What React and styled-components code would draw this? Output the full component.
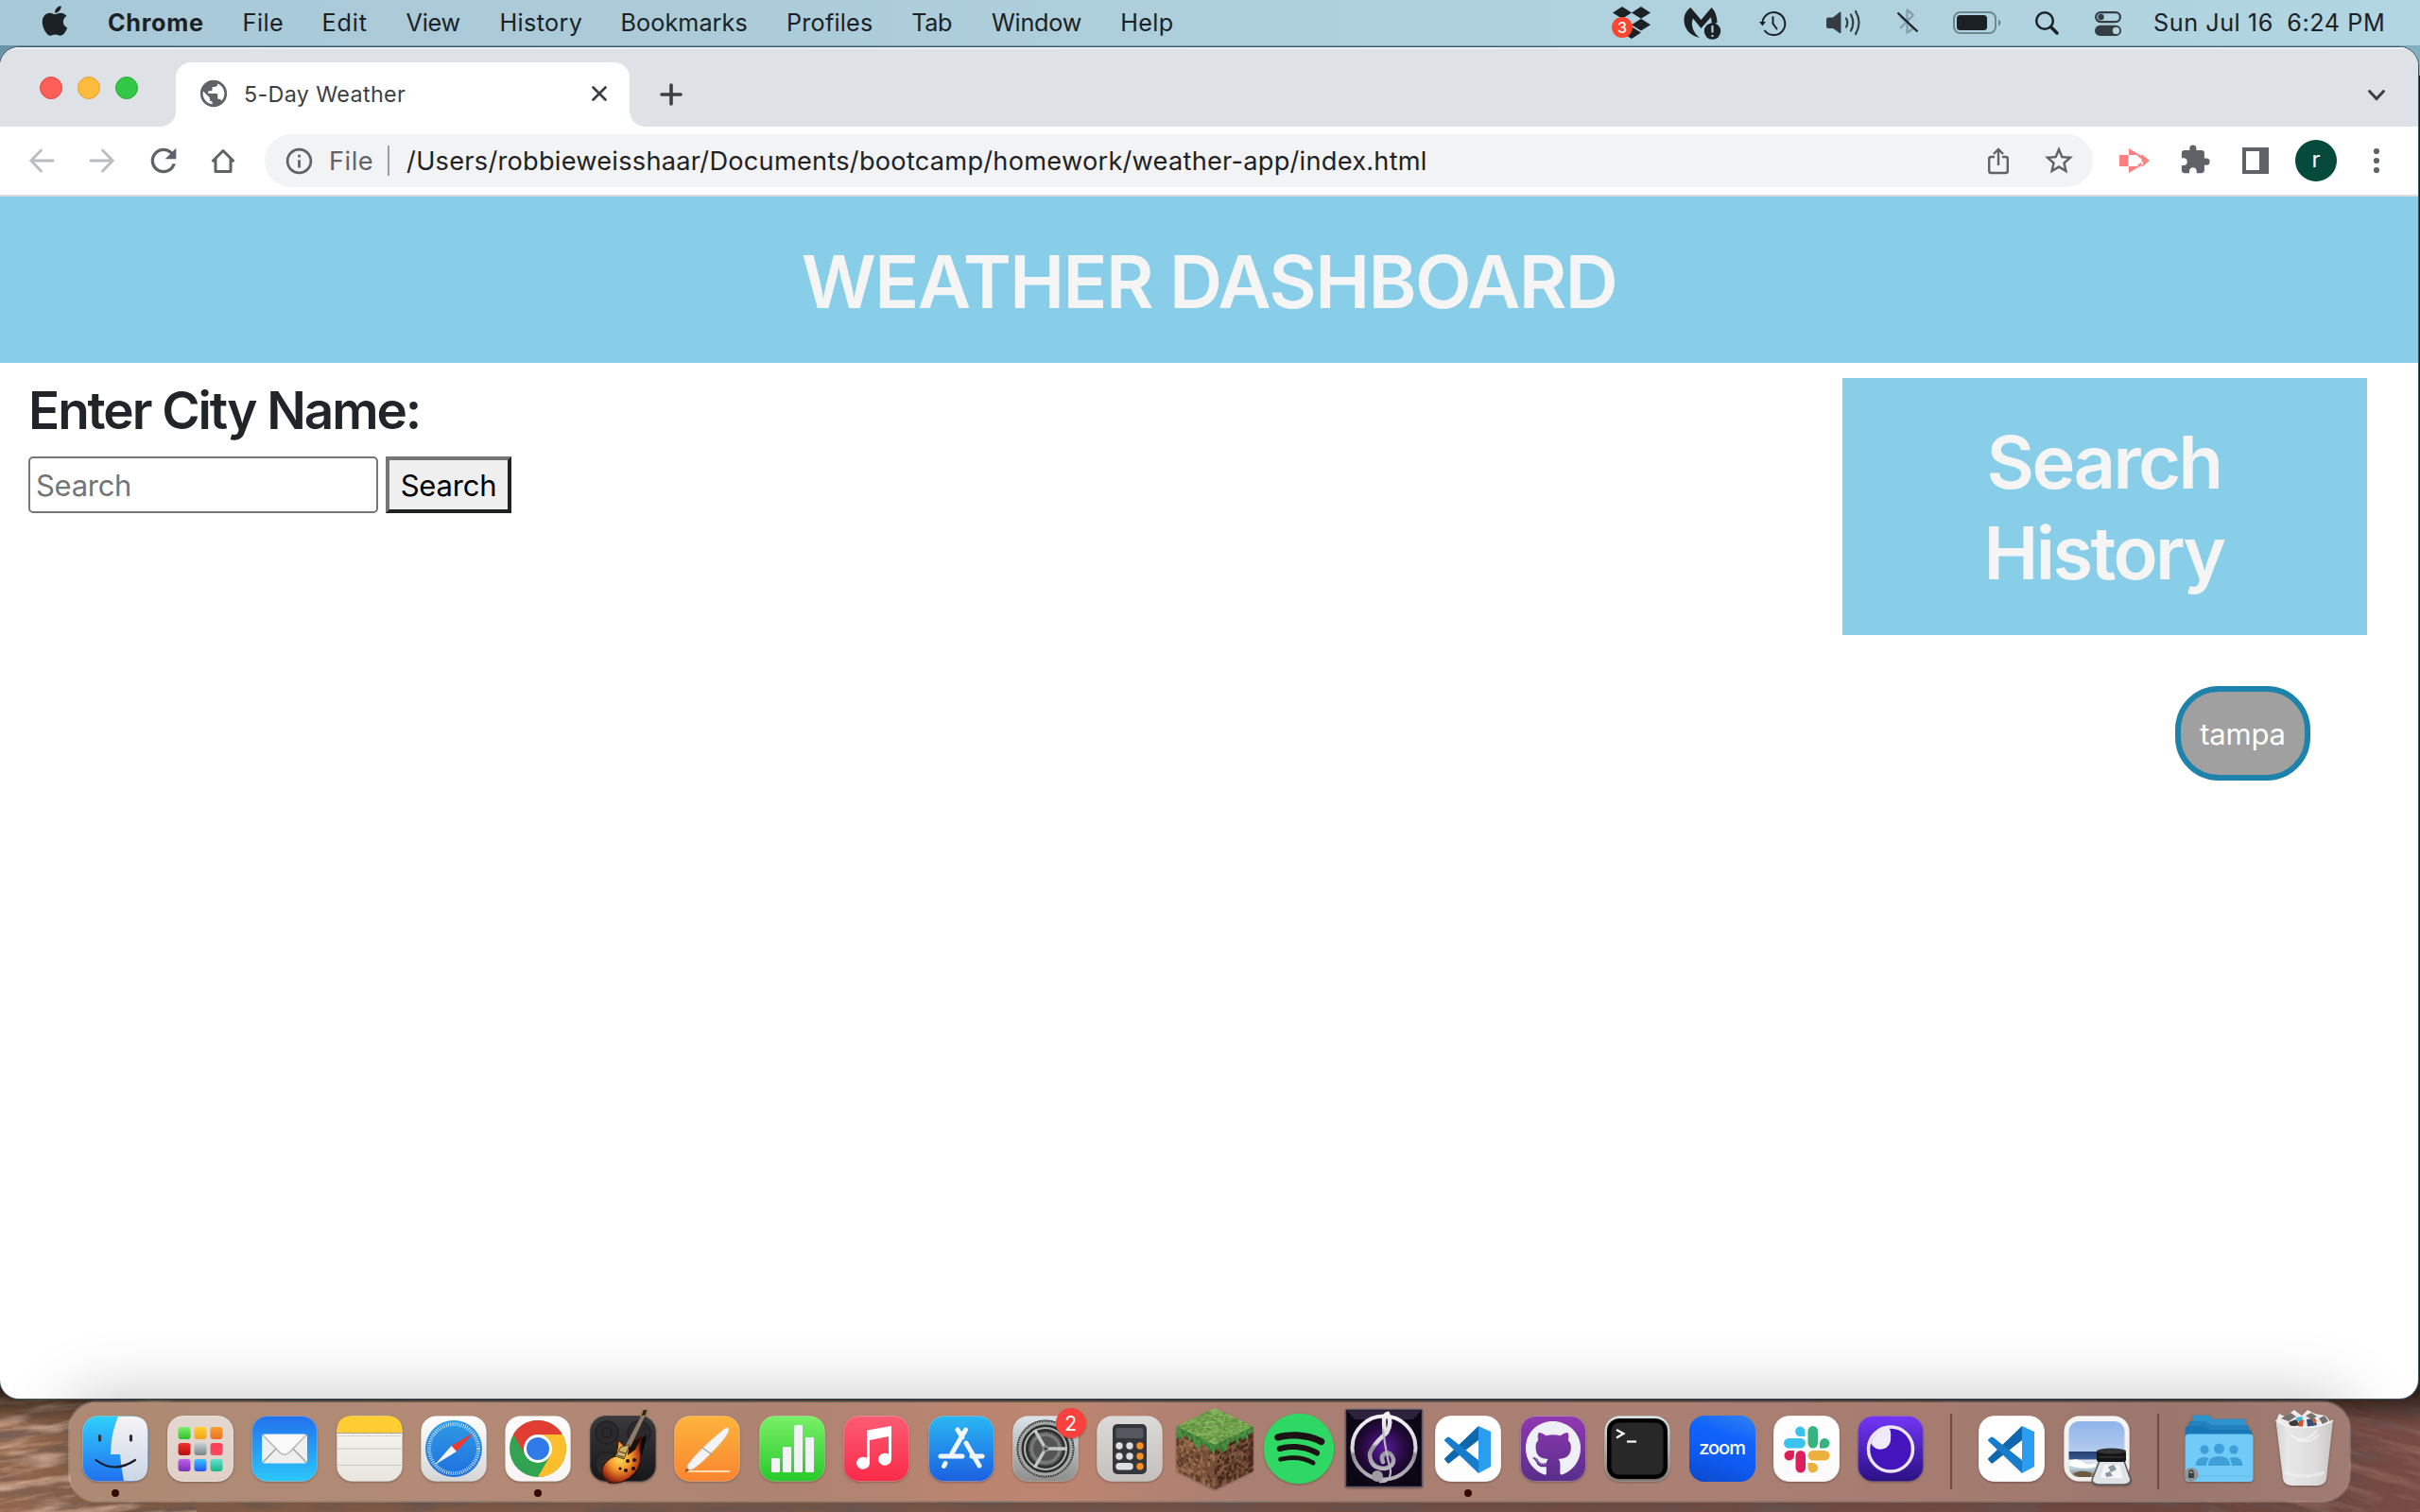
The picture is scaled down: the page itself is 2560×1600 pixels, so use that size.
import React from "react";
import styled, { createGlobalStyle } from "styled-components";
import { FaApple, FaDropbox, FaGithub, FaSpotify } from "react-icons/fa";
import { MdPublic, MdRefresh, MdStarBorder, MdInfoOutline, MdExtension } from "react-icons/md";

const GlobalStyle = createGlobalStyle`
  *, *::before, *::after { box-sizing: border-box; }
  body {
    margin: 0;
    overflow: hidden;
    font-family: Inter, "Liberation Sans", sans-serif;
  }
  h1, h2, p { margin: 0; }
  svg { display: block; flex: none; }
`;

const Desktop = styled.div`
  position: relative;
  display: flex;
  flex-direction: column;
  width: 2560px;
  height: 1600px;
  overflow: hidden;
  background: linear-gradient(90deg, #6c94a9, #83afc2) top / 100% 80px no-repeat, #191817;
`;

/* ---------- Menu bar ---------- */

const MenuBar = styled.header`
  display: flex;
  align-items: center;
  height: 48px;
  flex: none;
  padding-left: 40px;
  color: #1b2124;
  font-size: 25.2px;
  line-height: 46px;
  background: linear-gradient(90deg, #a8c9d7, #abcbd9 25%, #afd0dd 60%, #b1d5e1);
`;

const AppleSlot = styled.div`
  width: 74px;
  margin-top: -4px;
`;

const MenuItem = styled.div`
  width: ${(p) => p.$w}px;
  letter-spacing: ${(p) => p.$ls || 0}px;
  font-weight: ${(p) => (p.$bold ? 700 : 400)};
  white-space: nowrap;
`;

const StatusArea = styled.div`
  display: flex;
  align-items: center;
  margin-left: auto;
  height: 48px;
`;

const StatusIcon = styled.svg`
  height: 48px;
  width: ${(p) => p.$w}px;
  margin-right: ${(p) => p.$gap}px;
  overflow: visible;
`;

const DropboxSlot = styled.div`
  position: relative;
  width: 38px;
  margin-right: 36px;
  svg { margin: 0 -1px; }
`;

const StatusBadge = styled.span`
  position: absolute;
  left: -2px;
  top: 14px;
  width: 22px;
  height: 22px;
  border-radius: 50%;
  background: #ff452f;
  color: #fff;
  font-size: 16px;
  font-weight: 500;
  line-height: 22px;
  text-align: center;
`;

const Clock = styled.div`
  width: 282px;
  display: flex;
  letter-spacing: 0.55px;
  white-space: pre;
  line-height: 45px;
  gap: 14.5px;
`;

/* ---------- Browser window ---------- */

const Window = styled.main`
  display: flex;
  flex-direction: column;
  width: 2558px;
  height: 1430px;
  margin-top: 2px;
  flex: none;
  overflow: hidden;
  border-radius: 20px;
  background: #fff;
  box-shadow: 0 0 0 1px #3d5560;
  position: relative;
`;

const TabStrip = styled.div`
  display: flex;
  align-items: flex-end;
  height: 84px;
  flex: none;
  background: #dee1e6;
  border-top: 2px solid #eff1f4;
`;

const TrafficLights = styled.div`
  display: flex;
  gap: 16px;
  width: 186px;
  padding-left: 42px;
  align-self: flex-start;
  margin-top: 29px;
`;

const Light = styled.i`
  width: 24px;
  height: 24px;
  border-radius: 50%;
  background: ${(p) => p.$c};
  border: 1px solid ${(p) => p.$b};
`;

const Tab = styled.div`
  position: relative;
  display: flex;
  align-items: center;
  width: 480px;
  height: 68px;
  padding: 0 22px 2px 23px;
  border-radius: 16px 16px 0 0;
  background: #fff;
  color: #3c4043;
  &::before, &::after {
    content: "";
    position: absolute;
    bottom: 0;
    width: 16px;
    height: 16px;
  }
  &::before { left: -16px; background: radial-gradient(circle at 0 0, transparent 15.5px, #fff 16px); }
  &::after { right: -16px; background: radial-gradient(circle at 100% 0, transparent 15.5px, #fff 16px); }
`;

const TabTitle = styled.span`
  flex: 1;
  margin-left: 15px;
  font-size: 23.3px;
  letter-spacing: 0.36px;
`;

const NewTab = styled.svg`
  width: 26px;
  height: 26px;
  margin: 0 0 21px 31px;
`;

const TabSearch = styled.svg`
  width: 22px;
  height: 16px;
  margin: 0 33px 25px auto;
`;

const Toolbar = styled.div`
  display: flex;
  align-items: center;
  height: 74px;
  flex: none;
  border-bottom: 2px solid #dadce0;
  background: #fff;
`;

const ToolIcon = styled.svg`
  width: ${(p) => p.$w}px;
  height: 72px;
  margin-left: ${(p) => p.$gap}px;
  overflow: visible;
`;

const ReloadSlot = styled.div`
  width: 28px;
  margin-left: 38px;
  svg { margin-left: -6px; }
`;

const Omnibox = styled.div`
  display: flex;
  align-items: center;
  width: 1934px;
  height: 56px;
  margin-left: 31px;
  padding: 0 18px 0 20px;
  border-radius: 28px;
  background: #f1f3f4;
  color: #202124;
  font-size: 27.2px;
`;

const Scheme = styled.span`
  margin-left: 15px;
  color: #5f6368;
  letter-spacing: 0.5px;
`;

const Divider = styled.i`
  width: 2px;
  height: 32px;
  margin: 0 18px 0 15px;
  background: #9c9fa3;
`;

const Url = styled.span`
  flex: 1;
  letter-spacing: 0.25px;
`;

const StarSlot = styled.div`
  margin-left: 35px;
`;

const Avatar = styled.div`
  width: 44px;
  height: 44px;
  margin-left: 28px;
  border-radius: 50%;
  background: #054a3b;
  color: #fff;
  font-size: 24px;
  line-height: 42px;
  text-align: center;
`;

/* ---------- Page ---------- */

const Banner = styled.h1`
  height: 176px;
  flex: none;
  padding-top: 42px;
  background: #89cee9;
  color: whitesmoke;
  font-size: 77.6px;
  font-weight: 560;
  line-height: 96px;
  letter-spacing: -1.6px;
  text-align: center;
`;

const Columns = styled.div`
  display: flex;
  justify-content: space-between;
  align-items: flex-start;
  padding: 16px 54px 0 30px;
`;

const SearchForm = styled.section`
  h2 {
    height: 67px;
    margin-bottom: 16px;
    color: #212529;
    font-size: 54.8px;
    font-weight: 560;
    line-height: 69px;
    letter-spacing: -2.05px;
  }
`;

const FormRow = styled.div`
  display: flex;
  gap: 8px;
`;

const CityInput = styled.input`
  width: 370px;
  height: 60px;
  padding: 0 6px;
  border: 2px solid #767676;
  border-radius: 5px;
  font: 31px/56px Inter, "Liberation Sans", sans-serif;
  letter-spacing: -0.3px;
  &::placeholder { color: #757575; opacity: 1; }
`;

const SearchButton = styled.button`
  width: 133px;
  height: 60px;
  padding: 1px 0 0;
  border: 4px solid;
  border-color: #767676 #1f2221 #1f2221 #767676;
  background: #efefef;
  color: #000;
  font: 31px/52px Inter, "Liberation Sans", sans-serif;
  letter-spacing: -0.2px;
`;

const HistoryPanel = styled.aside`
  display: flex;
  flex-direction: column;
  align-items: flex-end;
  width: 555px;
  h2 {
    width: 100%;
    height: 272px;
    padding: 41px 151px 0 149px;
    background: #89cee9;
    color: whitesmoke;
    font-size: 77.6px;
    font-weight: 560;
    line-height: 96px;
    letter-spacing: -2.6px;
    text-align: center;
  }
`;

const CityPill = styled.button`
  width: 143px;
  height: 100px;
  margin: 54px 60px 0 0;
  padding: 1px 0 0;
  border: 6px solid #1e83ab;
  border-radius: 46px;
  background: #a0a0a0;
  color: #fff;
  font: 31px/87px Inter, "Liberation Sans", sans-serif;
  letter-spacing: -0.2px;
`;

/* ---------- Dock ---------- */

const Wallpaper = styled.svg`
  position: absolute;
  left: 0;
  bottom: 0;
  width: 2560px;
  height: 150px;
`;

const DockArea = styled.footer`
  position: relative;
  display: flex;
  height: 120px;
  flex: none;
  padding: 2px 0 0 72px;
`;

const DockBar = styled.nav`
  display: flex;
  width: 2415px;
  height: 108px;
  padding-left: 3.500px;
  border: 2px solid rgba(255, 255, 255, 0.2);
  border-radius: 30px;
  background: linear-gradient(90deg, #ad8a73, #b38a76 18%, #ad8372 30%, #bd8570 43%, #a97f72 52%, #aa8074 70%, #a67c70 82%, #9a766d 92%, #a07c72);
  background-clip: padding-box;
  background-origin: border-box;
  background-color: #b09080;
  box-shadow: 0 0 70px rgba(0, 0, 0, 0.25);
`;

const DockSlot = styled.div`
  position: relative;
  display: flex;
  justify-content: center;
  width: 89.44px;
  height: 104px;
  padding-top: 14px;
  &::after {
    content: "";
    display: ${(p) => (p.$running ? "block" : "none")};
    position: absolute;
    left: 40px;
    bottom: 4px;
    width: 8px;
    height: 8px;
    border-radius: 50%;
    background: #330b02;
  }
`;

const Tile = styled.svg`
  width: 70px;
  height: 70px;
  overflow: visible;
  filter: drop-shadow(0 1px 1px rgba(0, 0, 0, 0.3));
`;

const DockSeparator = styled.i`
  width: ${(p) => p.$w}px;
  display: flex;
  justify-content: center;
  padding-top: 12px;
  &::before {
    content: "";
    width: 2px;
    height: 80px;
    background: #74493e;
  }
`;

const DockBadge = styled.span`
  position: absolute;
  right: 2px;
  top: 6px;
  width: 32px;
  height: 32px;
  border-radius: 50%;
  background: #f9423e;
  color: #fff;
  font-size: 21px;
  line-height: 33px;
  text-align: center;
  box-shadow: 0 1px 2px rgba(0, 0, 0, 0.3);
`;

const ZoomTile = styled.div`
  width: 70px;
  height: 70px;
  border-radius: 16px;
  background: linear-gradient(200deg, #3283f0, #0f62fb 35%, #0f5cf5 60%, #0a48c8);
  color: #fff;
  font-size: 20px;
  font-weight: 500;
  line-height: 68px;
  letter-spacing: -1px;
  text-align: center;
`;

/* ---------- Dock artwork ---------- */

function Base({ id, from, to, stroke }) {
  return (
    <>
      <defs>
        <linearGradient id={id} x1="0" y1="0" x2="0" y2="1">
          <stop offset="0" stopColor={from} />
          <stop offset="1" stopColor={to} />
        </linearGradient>
      </defs>
      <rect x="0.5" y="0.5" width="69" height="69" rx="16" fill={`url(#${id})`} stroke={stroke || "rgba(255,255,255,.25)"} />
    </>
  );
}

const Finder = () => (
  <Tile viewBox="0 0 70 70">
    <Base id="finder" from="#2fd0fd" to="#2170ee" />
    <defs>
      <linearGradient id="face" x1="0" y1="0" x2="0" y2="1">
        <stop offset="0" stopColor="#f6f4f6" />
        <stop offset="1" stopColor="#cbd6e6" />
      </linearGradient>
    </defs>
    <path d="M38 1H54Q69 1 69 16V54Q69 69 54 69H44Q41 54 40 41H30Q30 20 38 1Z" fill="url(#face)" />
    <path d="M18.500 21.500V26M51.500 21.500V26" stroke="#26313a" strokeWidth="3.200" strokeLinecap="round" />
    <path d="M14.500 47Q34 62 56 47" fill="none" stroke="#161b22" strokeWidth="2.200" strokeLinecap="round" />
  </Tile>
);

const PADS = [
  ["#7cf06c", "#2fc02c"], ["#fdd02f", "#f3a31f"], ["#f8a02a", "#e8702a"],
  ["#f6302c", "#b50f12"], ["#c3cfd3", "#7a8486"], ["#fb3c5c", "#fa4b5f"],
  ["#bd62e8", "#7b2fb8"], ["#38c6fb", "#2255ee"], ["#5fe3cf", "#1fb383"],
];

const Launchpad = () => (
  <Tile viewBox="0 0 70 70">
    <Base id="launch" from="#e3d8d1" to="#e0d0c8" stroke="#e8ddd6" />
    {PADS.map(([a, b], i) => (
      <g key={a}>
        <defs>
          <linearGradient id={`pad${i}`} x1="0" y1="0" x2="0" y2="1">
            <stop offset="0" stopColor={a} />
            <stop offset="1" stopColor={b} />
          </linearGradient>
        </defs>
        <rect x={11.5 + (i % 3) * 17} y={12 + Math.floor(i / 3) * 17} width="13" height="13" rx="3" fill={`url(#pad${i})`} />
      </g>
    ))}
  </Tile>
);

const Mail = () => (
  <Tile viewBox="0 0 70 70">
    <Base id="mail" from="#2272ec" to="#2cc6fb" />
    <rect x="11" y="19.500" width="48" height="31" rx="3" fill="#efefef" />
    <path d="M12 49.500L26 35M58 49.500L44 35" stroke="#a5a5a5" strokeWidth="1.500" />
    <path d="M12 20.500L30 39Q35 43.500 40 39L58 20.500" fill="#fafafa" stroke="#b5b5b5" strokeWidth="1.500" />
  </Tile>
);

const Notes = () => (
  <Tile viewBox="0 0 70 70">
    <Base id="notes" from="#f7f6f3" to="#e8e6df" />
    <path d="M0.500 18V16Q0.500 0.500 16 0.500H54Q69.500 0.500 69.500 16V18Z" fill="#fecd34" />
    <path d="M0.500 18.500H69.500" stroke="#a79f90" strokeWidth="1.200" />
    <path d="M2 21.500H68" stroke="#bdbab3" strokeDasharray="1.500 1" />
    <path d="M0.500 35H69.500M0.500 52.500H69.500" stroke="#c9c7c1" />
  </Tile>
);

const Safari = () => (
  <Tile viewBox="0 0 70 70">
    <Base id="safari" from="#ffffff" to="#d6d6d6" />
    <defs>
      <linearGradient id="compass" x1="0" y1="0" x2="0" y2="1">
        <stop offset="0" stopColor="#2f9ce4" />
        <stop offset="1" stopColor="#1e6fe0" />
      </linearGradient>
    </defs>
    <circle cx="35" cy="35" r="30" fill="url(#compass)" />
    <circle cx="35" cy="35" r="26" fill="none" stroke="#cfe6fa" strokeWidth="4" strokeDasharray="0.900 1.369" />
    <path d="M56 18L38 38L32.500 32Z" fill="#f0392e" />
    <path d="M15 52L38 38L32.500 32Z" fill="#f7f7f7" />
  </Tile>
);

const Chrome = () => (
  <Tile viewBox="0 0 70 70">
    <Base id="chrome" from="#fdfbfb" to="#f8f5f4" />
    <circle cx="35" cy="35" r="30" fill="#32a350" />
    <path d="M35 35L9.020 20A30 30 0 0 1 60.980 20Z" fill="#e23d33" />
    <path d="M9.020 20L22 42.500L35 35V20Z" fill="#e23d33" />
    <path d="M35 20H60.980A30 30 0 0 1 35 65L48 42.500Z" fill="#fbbf2e" />
    <circle cx="35" cy="35" r="15" fill="#fff" />
    <circle cx="35" cy="35" r="12" fill="#2f7bea" />
  </Tile>
);

const GarageBand = () => (
  <Tile viewBox="0 0 70 70">
    <Base id="garage" from="#3a3a3d" to="#17171a" stroke="#454549" />
    <defs>
      <radialGradient id="burst" cx="45%" cy="45%" r="60%">
        <stop offset="0" stopColor="#ffe25a" />
        <stop offset="0.450" stopColor="#f49a2d" />
        <stop offset="0.800" stopColor="#b23a17" />
        <stop offset="1" stopColor="#4f140b" />
      </radialGradient>
    </defs>
    <g fill="#2a2a2d" stroke="#202023" strokeWidth="1.500">
      <circle cx="18" cy="18" r="12" /><circle cx="18" cy="18" r="5" />
      <circle cx="52" cy="18" r="12" /><circle cx="18" cy="51" r="12" />
    </g>
    <path d="M47 30L60 20Q58 34 54 44Q52 64 36 70L50 60Z" fill="#08080a" />
    <path d="M30 26L36 32L44 27L55 22L53 36Q56 50 48 60Q36 74 20 71Q10 64 14 54Q18 46 27 43Q30 36 30 26Z" fill="url(#burst)" stroke="#3a1009" />
    <path d="M42 28L54 24L48 36L40 42Z" fill="#19110f" />
    <path d="M38 31L56 -3L59 -1L43 33Z" fill="#8e7b6b" />
    <path d="M54 1L56 -6L61 -7L59 0Z" fill="#2b261e" stroke="#b2a04c" strokeWidth="0.800" />
    <path d="M33 33L42 31L36 46L27 43Z" fill="#cdb36a" stroke="#54401b" />
    <path d="M31 38L38 40M29 42L36 44" stroke="#4a3416" />
    <g fill="#1d0d08"><circle cx="40" cy="48" r="2" /><circle cx="47" cy="47" r="2" /><circle cx="38" cy="58" r="2" /><circle cx="46" cy="56" r="2" /><circle cx="32" cy="56" r="1.500" /></g>
  </Tile>
);

const Pages = () => (
  <Tile viewBox="0 0 70 70">
    <Base id="pages" from="#fdb43c" to="#fb8530" />
    <path d="M16 59H58" stroke="#ffdcae" strokeWidth="2" strokeLinecap="round" />
    <path d="M52 15Q58 10 58 16Q57 22 37 42Q25 54 19 57Q14 58 14 53Q24 38 52 15Z" fill="#f4f4f6" stroke="#d6c2ae" strokeWidth="0.600" />
    <path d="M13 56L11.500 60L16 57.500Z" fill="#5c564f" />
    <path d="M30 34L40 41" stroke="#9b9b9e" strokeWidth="1.200" />
  </Tile>
);

const Numbers = () => (
  <Tile viewBox="0 0 70 70">
    <Base id="numbers" from="#79f067" to="#27c92b" />
    <g fill="#f2f3f5">
      <rect x="13" y="45" width="9" height="15" rx="1.200" /><rect x="25" y="33" width="9" height="27" rx="1.200" />
      <rect x="37" y="10" width="9" height="50" rx="1.200" /><rect x="49" y="23" width="9" height="37" rx="1.200" />
    </g>
  </Tile>
);

const Music = () => (
  <Tile viewBox="0 0 70 70">
    <Base id="music" from="#fc5c74" to="#fa2a48" />
    <path d="M25 15.500L51 11V47A7 6.500 0 1 1 48 40.800V22L28 26V51A7 6.500 0 1 1 25 44.800Z" fill="#fff" />
  </Tile>
);

const AppStore = () => (
  <Tile viewBox="0 0 70 70">
    <Base id="store" from="#2ab8f4" to="#1c5fe0" />
    <g stroke="#f1f6fc" strokeWidth="5" strokeLinecap="round">
      <path d="M39.500 15L25 40M31 15L36 23M40 29L54 53M13 43H36M46 43H57M18 50.500L16.500 53.500" />
    </g>
  </Tile>
);

const Settings = () => (
  <Tile viewBox="0 0 70 70">
    <Base id="settings" from="#dbe4e8" to="#8f8f8c" />
    <circle cx="35" cy="35" r="30.500" fill="#2b2c2c" />
    <circle cx="35" cy="35" r="27" fill="none" stroke="#a4a7a6" strokeWidth="3" />
    <circle cx="35" cy="35" r="28.500" fill="none" stroke="#a4a7a6" strokeWidth="3" strokeDasharray="1.200 1.280" />
    <circle cx="35" cy="35" r="18" fill="#77797a" />
    <circle cx="35" cy="35" r="18" fill="none" stroke="#3a3a3a" strokeWidth="3" strokeDasharray="1.500 1.200" />
    <circle cx="35" cy="35" r="13" fill="#555" />
    <circle cx="35" cy="35" r="22" fill="none" stroke="#b3b6b5" strokeWidth="2" />
    <path d="M35 35H58M35 35L23.500 15M35 35L23.500 55" stroke="#c4c7c6" strokeWidth="3.500" />
    <circle cx="35" cy="35" r="3.500" fill="#8c8e8d" /><circle cx="35" cy="35" r="1.500" fill="#333" />
  </Tile>
);

const Calculator = () => (
  <Tile viewBox="0 0 70 70">
    <Base id="calc" from="#dcdad8" to="#c4c0bd" />
    <rect x="17" y="9" width="36" height="53" rx="5" fill="#33363b" />
    <rect x="20.500" y="13" width="29" height="11" rx="2" fill="#54585e" />
    <g fill="#dedede">
      <circle cx="24" cy="32" r="3.700" /><circle cx="35" cy="32" r="3.700" />
      <circle cx="24" cy="43" r="3.700" /><circle cx="35" cy="43" r="3.700" />
      <rect x="20.300" y="50" width="18.500" height="7.400" rx="3.700" />
    </g>
    <g fill="#fb9022"><circle cx="46" cy="32" r="3.700" /><circle cx="46" cy="43" r="3.700" /><circle cx="46" cy="53.700" r="3.700" /></g>
  </Tile>
);

const noise = (i, j, k) => {
  const v = Math.sin(i * 127.1 + j * 311.7 + k * 74.7) * 43758.5453;
  return v - Math.floor(v);
};
const pick = (list, v) => list[Math.floor(v * list.length)];
const GRASS = ["#7bb355", "#6ca348", "#86bd60", "#5f9440", "#74ac50"];
const EDGE = ["#3f8a3a", "#357a33", "#4d9641"];
const DIRT = ["#8a5f41", "#6e4a33", "#9c7150", "#593a28", "#7b533a"];
const DIRT_DARK = ["#5d3c29", "#46291c", "#734c35", "#3c2318", "#80583e"];
const CELLS = Array.from({ length: 256 }, (_, n) => [n % 16, Math.floor(n / 16)]);
const FACES = [
  { m: "matrix(2.530 1.210 -2.530 1.210 41 0)", k: 1 },
  { m: "matrix(2.530 1.210 0 2.940 0.500 19.500)", k: 2 },
  { m: "matrix(2.530 -1.210 0 2.940 41 39)", k: 3 },
];

const Minecraft = () => (
  <Tile viewBox="0 0 70 70">
    <g transform="translate(-6 -8)">
      {FACES.map(({ m, k }) => (
        <g key={k} transform={m}>
          {CELLS.map(([i, j]) => {
            const grassy = k === 1 || j < 2 + Math.floor(noise(i, 9, k) * 3);
            const colors = k === 1 ? GRASS : grassy ? EDGE : k === 2 ? DIRT : DIRT_DARK;
            return <rect key={`${i}-${j}`} x={i} y={j} width="1.060" height="1.060" fill={pick(colors, noise(i, j, k))} />;
          })}
        </g>
      ))}
    </g>
  </Tile>
);

const Spotify = () => (
  <Tile viewBox="0 0 70 70">
    <circle cx="35" cy="35" r="36" fill="#1a1414" />
    <FaSpotify x="-3.500" y="-3.500" size={77} color="#2fd865" />
  </Tile>
);

const Treble = () => (
  <Tile viewBox="0 0 70 70">
    <defs>
      <radialGradient id="violet">
        <stop offset="0" stopColor="#5b1a9c" />
        <stop offset="0.600" stopColor="#220938" />
        <stop offset="1" stopColor="#0b0614" />
      </radialGradient>
      <linearGradient id="steel" x1="0" y1="0" x2="0" y2="1">
        <stop offset="0" stopColor="#f4f4f6" />
        <stop offset="0.550" stopColor="#d4d4d8" />
        <stop offset="0.600" stopColor="#8d8d92" />
        <stop offset="1" stopColor="#b5b5ba" />
      </linearGradient>
    </defs>
    <rect x="-5.500" y="-6.500" width="81" height="82" rx="1" fill="url(#violet)" stroke="#5f5768" strokeWidth="1.500" />
    <path d="M-4 -5H74L66 4H4Z" fill="#3d3151" opacity="0.700" />
    <circle cx="35" cy="34" r="33.500" fill="none" stroke="url(#steel)" strokeWidth="4" />
    <path d="M36 17Q33 -1 39 -2Q44 8 38 18Q24 30 20 40Q20 56 36 56Q46 54 45 46Q43 38 36 40Q31 43 34 49" fill="none" stroke="url(#steel)" strokeWidth="4.500" strokeLinecap="round" />
    <path d="M34 14Q36 34 42 58Q42 72 30 70" fill="none" stroke="#b9b9be" strokeWidth="2.200" />
    <circle cx="28" cy="64" r="6" fill="#9c9ca1" />
  </Tile>
);

const VSCode = ({ id }) => (
  <Tile viewBox="0 0 70 70">
    <Base id={id} from="#ffffff" to="#fdfdfd" stroke="#f2eeec" />
    <path d="M46 11L10.500 45Q9.500 46 10.500 47L13 50Q14 51 15.500 50L46 26Z" fill="#0f68ad" />
    <path d="M46 61L10.500 27Q9.500 26 10.500 25L13 23Q14 22 15.500 23L46 47Z" fill="#167ccb" />
    <path d="M46 11L59 17V54L46 61Z" fill="#2a9df1" />
    <path d="M46 26.500L33 36.500L46 47Z" fill="#fff" />
  </Tile>
);

const GitHub = () => (
  <Tile viewBox="0 0 70 70">
    <Base id="github" from="#9138b2" to="#572e89" />
    <FaGithub x="5" y="5" size={60} color="#eef0f5" />
  </Tile>
);

const Terminal = () => (
  <Tile viewBox="0 0 70 70">
    <Base id="term" from="#d5e5ea" to="#77706c" />
    <rect x="3" y="3" width="64" height="64" rx="13" fill="#000" />
    <rect x="7.500" y="7.500" width="55" height="55" rx="8" fill="#282828" />
    <path d="M13 15L20.500 19L13 23.500" fill="none" stroke="#fff" strokeWidth="2.200" />
    <path d="M24 27.500H34" stroke="#fff" strokeWidth="2.200" />
  </Tile>
);

const Slack = () => (
  <Tile viewBox="0 0 70 70">
    <Base id="slack" from="#ffffff" to="#fafafa" stroke="#f2eeec" />
    <path d="M28.500 22H33.500V16.500A5.200 5.200 0 1 0 28.500 22Z" fill="#3bc3f0" />
    <rect x="11" y="24" width="23" height="10.500" rx="5.250" fill="#3bc3f0" />
    <rect x="36.500" y="11" width="10.500" height="23.500" rx="5.250" fill="#36b37e" />
    <path d="M49 34.500V29A5.250 5.250 0 1 1 54.200 34.500Z" fill="#36b37e" />
    <path d="M22 37V42A5.250 5.250 0 1 1 16.500 37Z" fill="#df1d5a" />
    <rect x="23.500" y="37" width="10.500" height="23.500" rx="5.250" fill="#df1d5a" />
    <rect x="36.500" y="37" width="23" height="10.500" rx="5.250" fill="#ebb13c" />
    <path d="M36.500 50H42A5.250 5.250 0 1 1 36.500 55.200Z" fill="#ebb13c" />
  </Tile>
);

const Insomnia = () => (
  <Tile viewBox="0 0 70 70">
    <Base id="insomnia" from="#7236f6" to="#2a1184" stroke="rgba(255,255,255,.1)" />
    <circle cx="35" cy="35.500" r="23.500" fill="#4415bd" stroke="#ede6f8" strokeWidth="3.500" />
    <path d="M33 12Q36 17 35 23A11 11 0 0 1 14 29Q18 16 33 12Z" fill="#efe9f8" />
  </Tile>
);

const Preview = () => (
  <Tile viewBox="0 0 70 70">
    <Base id="preview" from="#f7f5f5" to="#efedec" />
    <defs>
      <linearGradient id="sky" x1="0" y1="0" x2="0" y2="1">
        <stop offset="0" stopColor="#8fb4ea" /><stop offset="0.540" stopColor="#b3cbee" />
        <stop offset="0.550" stopColor="#27406f" /><stop offset="0.670" stopColor="#33568f" />
        <stop offset="0.700" stopColor="#dfe7ee" /><stop offset="0.850" stopColor="#b9cfe0" />
        <stop offset="1" stopColor="#7a6b55" />
      </linearGradient>
    </defs>
    <rect x="5.500" y="6" width="59" height="59" rx="11" fill="url(#sky)" />
    <path d="M6 48Q14 44 20 49T34 50V54Q24 58 6 53Z" fill="#fff" />
    <path d="M10 62Q18 56 30 61L28 65H17Z" fill="#6d5a42" />
    <path d="M38 48H64L71 68Q70 73 64 73H37Q31 73 30 68Z" fill="#dfe3e5" stroke="#55595b" strokeWidth="1.500" />
    <path d="M43 52H59L63 66H39Z" fill="#f4f5f6" />
    <path d="M47 54L53 52L56 57L50 60ZM44 61L49 59L52 64L45 65Z" fill="#8a99a4" />
    <rect x="35" y="37" width="31" height="12" rx="2.500" fill="#151515" />
    <ellipse cx="50.500" cy="37.500" rx="15.500" ry="3" fill="#333" />
    <path d="M37 44H64" stroke="#3e3e3e" />
  </Tile>
);

const SharedFolder = () => (
  <Tile viewBox="0 0 70 70">
    <path d="M6 20V2Q6 -0.500 9 -0.500H22Q25 -0.500 27 3.500H60Q63 3.500 63 7V20Z" fill="#2f93cb" />
    <path d="M2 24V9Q2 6 5 6H20L26 10H63Q66 10 66 13V24Z" fill="#2382bd" />
    <path d="M-1 30V14Q-1 11 2 11H20L26 15H66Q69 15 69 18V30Z" fill="#1878b6" />
    <rect x="-1.500" y="19.500" width="72" height="50.500" rx="4" fill="#72cbf7" />
    <path d="M-1 64H70" stroke="#62bbe8" />
    <g fill="#3f9fd8">
      <circle cx="34.500" cy="35" r="5.500" /><path d="M23 53Q23 43 34.500 43T46 53Z" />
      <circle cx="19" cy="36" r="4.700" /><path d="M9.500 53Q10 44 19 44Q22 44 24 45.500Q21 48 21 53Z" />
      <circle cx="50" cy="36" r="4.700" /><path d="M59.500 53Q59 44 50 44Q47 44 45 45.500Q48 48 48 53Z" />
    </g>
    <circle cx="5" cy="62.500" r="7.500" fill="#8f9498" />
    <rect x="2" y="61" width="6" height="5" fill="#3d4043" />
    <path d="M3 61V59.500Q3 58 5 58T7 59.500V61" fill="none" stroke="#3d4043" strokeWidth="1.300" />
  </Tile>
);

const Trash = () => (
  <Tile viewBox="0 0 70 70">
    <defs>
      <linearGradient id="bin" x1="0" y1="0" x2="1" y2="0">
        <stop offset="0" stopColor="#d4d3d3" /><stop offset="0.200" stopColor="#e9e8e8" />
        <stop offset="0.700" stopColor="#dddcdc" /><stop offset="1" stopColor="#cbc8c7" />
      </linearGradient>
    </defs>
    <path d="M5 5L8 -2L14 1L24 -6L32 0L38 -6L46 -2L57 0L62 6L56 13H14Z" fill="#eceaea" />
    <path d="M10 3L20 -3L26 1L18 6ZM36 0L42 -3L48 1L42 4ZM50 3L56 0L60 6L54 9Z" fill="#77716f" />
    <path d="M18 7L26 4L30 10L20 12Z" fill="#413c3a" />
    <path d="M26 2L33 1L32 6L27 6Z" fill="#35b4d8" /><path d="M29 6L34 4L33 12L28 12Z" fill="#d2552f" />
    <path d="M37 4L46 3L48 10L38 12Z" fill="#334d74" /><path d="M42 3L48 5L45 9Z" fill="#d4622e" />
    <path d="M4.500 5Q14 12 34 12T65 5L58 67Q57 73 49 74H21Q13 73 12 67Z" fill="url(#bin)" />
    <path d="M4.500 5Q14 12.500 34 12.500T65 5" fill="none" stroke="#f6f6f6" strokeWidth="1.500" />
    <path d="M20 20Q34 32 48 16M26 26Q42 30 50 20" fill="none" stroke="#f7f7f7" strokeWidth="2" opacity="0.700" />
    <path d="M14 60Q34 68 56 60" fill="none" stroke="#f5f5f5" strokeWidth="3" opacity="0.500" />
  </Tile>
);

const APPS = [
  { name: "finder", art: <Finder />, running: true },
  { name: "launchpad", art: <Launchpad /> },
  { name: "mail", art: <Mail /> },
  { name: "notes", art: <Notes /> },
  { name: "safari", art: <Safari /> },
  { name: "chrome", art: <Chrome />, running: true },
  { name: "garageband", art: <GarageBand /> },
  { name: "pages", art: <Pages /> },
  { name: "numbers", art: <Numbers /> },
  { name: "music", art: <Music /> },
  { name: "appstore", art: <AppStore /> },
  { name: "settings", art: <Settings />, badge: "2" },
  { name: "calculator", art: <Calculator /> },
  { name: "minecraft", art: <Minecraft /> },
  { name: "spotify", art: <Spotify /> },
  { name: "treble", art: <Treble /> },
  { name: "vscode", art: <VSCode id="codeA" />, running: true },
  { name: "github", art: <GitHub /> },
  { name: "terminal", art: <Terminal /> },
  { name: "zoom", art: <ZoomTile>zoom</ZoomTile> },
  { name: "slack", art: <Slack /> },
  { name: "insomnia", art: <Insomnia /> },
];

const MENUS = [
  ["Chrome", 142.6, 0.72], ["File", 83.9, 0.44], ["Edit", 89, 0.9], ["View", 99, -0.2], ["History", 128, 0.35],
  ["Bookmarks", 175.5, 0.07], ["Profiles", 132.3, 0.22], ["Tab", 84.7, -0.4], ["Window", 136.2, -0.23], ["Help", 60, 0.33],
];

const INK = "#1b2124";
const SOFT = "#333d42";

function StatusIcons() {
  return (
    <>
      <DropboxSlot>
        <FaDropbox size={40} />
        <StatusBadge>3</StatusBadge>
      </DropboxSlot>
      <StatusIcon $w={39} $gap={41} viewBox="0 0 39 48" fill={INK}>
        <path d="M7.500 8L18.500 21L29.500 8C33 11 35.500 17 35.500 24L30 26L29 18L18.500 30L10 19.500C7.500 25 9 34 17 40C6 37.500 0.500 30 0.500 21C0.500 15 3.500 10.500 7.500 8Z" />
        <circle cx="30.500" cy="33" r="8.700" />
        <path d="M30.500 27V34.500M30.500 37V39" stroke="#b0d2de" strokeWidth="2.200" />
      </StatusIcon>
      <StatusIcon $w={28} $gap={43} viewBox="0 0 28 48" fill="none" stroke={INK} strokeWidth="2">
        <path d="M3.500 23A12 12 0 1 1 5.500 32" />
        <path d="M14.500 18V25L18.500 30.500" strokeLinecap="round" />
        <path d="M0 23H7L3.500 27.500Z" fill={INK} stroke="none" />
      </StatusIcon>
      <StatusIcon $w={36} $gap={39} viewBox="0 0 36 48" fill="none" stroke={SOFT} strokeWidth="2.200" strokeLinecap="round">
        <path d="M0 20.500Q0 18.500 2 18.500H7L14 12.800Q15.500 12 15.500 14V34Q15.500 36 14 35L7 30H2Q0 30 0 28Z" fill={SOFT} stroke="none" />
        <path d="M21 19.500Q23.500 24 21 28.500M26 15.500Q30.500 24 26 32.500M31 12Q38 24 31 36" />
      </StatusIcon>
      <StatusIcon $w={22} $gap={37} viewBox="0 0 22 48" fill="none">
        <path d="M3 17L17 30L10.500 34.500V10.500L17 16L3 30" stroke="#86a1ae" strokeWidth="2.400" strokeLinejoin="round" />
        <path d="M0.500 13.500L21.500 33.500" stroke={INK} strokeWidth="2.200" />
      </StatusIcon>
      <StatusIcon $w={51} $gap={36} viewBox="0 0 51 48" fill="none">
        <rect x="1" y="13" width="44" height="22" rx="6.500" stroke="#6f868f" strokeWidth="2" />
        <rect x="4" y="16" width="32" height="16" rx="3.500" fill={INK} />
        <path d="M48 20.500Q50.500 21.500 50.500 24T48 27.500Z" fill="#6f868f" />
      </StatusIcon>
      <StatusIcon $w={24} $gap={39} viewBox="0 0 24 48" fill="none" stroke={INK}>
        <circle cx="10" cy="22" r="8.800" strokeWidth="2.500" />
        <path d="M16.500 28.500L23 35" strokeWidth="3.500" strokeLinecap="round" />
      </StatusIcon>
      <StatusIcon $w={28} $gap={34} viewBox="0 0 28 48" fill="none">
        <rect x="1.100" y="13.100" width="25.800" height="10" rx="5" stroke={SOFT} strokeWidth="2.200" />
        <circle cx="6.500" cy="18" r="3.200" fill={SOFT} />
        <rect x="0" y="26.800" width="28" height="11.200" rx="5.600" fill={SOFT} />
        <circle cx="22.500" cy="32.400" r="3.700" fill="#b1d4e0" />
      </StatusIcon>
    </>
  );
}

function Rock() {
  return (
    <Wallpaper viewBox="0 0 2560 150" preserveAspectRatio="none">
      <defs>
        <linearGradient id="rock">
          <stop offset="0" stopColor="#94674c" />
          <stop offset="0.300" stopColor="#85604f" />
          <stop offset="0.600" stopColor="#7e564a" />
          <stop offset="1" stopColor="#784c45" />
        </linearGradient>
        <filter id="strata" x="0" y="0" width="100%" height="100%">
          <feTurbulence type="fractalNoise" baseFrequency="0.012 0.070" numOctaves="5" seed="8" />
          <feColorMatrix values="0 0 0 0 0.160  0 0 0 0 0.110  0 0 0 0 0.100  2.200 0 0 0 -0.950" />
        </filter>
        <filter id="glints" x="0" y="0" width="100%" height="100%">
          <feTurbulence type="fractalNoise" baseFrequency="0.014 0.090" numOctaves="5" seed="21" />
          <feColorMatrix values="0 0 0 0 0.780  0 0 0 0 0.520  0 0 0 0 0.380  0 2.400 0 0 -1.100" />
        </filter>
        <linearGradient id="shade" x1="0" y1="0" x2="0" y2="1">
          <stop offset="0.150" stopColor="#120a06" stopOpacity="0.750" />
          <stop offset="0.400" stopColor="#120a06" stopOpacity="0" />
        </linearGradient>
      </defs>
      <rect width="2560" height="150" fill="url(#rock)" />
      <g transform="rotate(-7 60 100)"><rect x="-60" y="-60" width="260" height="300" filter="url(#strata)" /><rect x="-60" y="-60" width="260" height="300" filter="url(#glints)" /></g>
      <rect x="180" width="2200" height="150" filter="url(#strata)" />
      <g transform="rotate(14 2500 80)"><rect x="2350" y="-60" width="300" height="320" filter="url(#strata)" /><rect x="2350" y="-60" width="300" height="320" filter="url(#glints)" opacity="0.300" /></g>
      <rect width="2560" height="150" fill="url(#shade)" />
    </Wallpaper>
  );
}

const GRAY = "#5f6368";

export default function App() {
  return (
    <Desktop>
      <GlobalStyle />
      <Rock />
      <MenuBar>
        <AppleSlot><FaApple size={36} /></AppleSlot>
        {MENUS.map(([label, w, ls]) => (
          <MenuItem key={label} $w={w} $ls={ls} $bold={label === "Chrome"}>{label}</MenuItem>
        ))}
        <StatusArea>
          <StatusIcons />
          <Clock><span>Sun Jul 16</span><span>6:24 PM</span></Clock>
        </StatusArea>
      </MenuBar>

      <Window>
        <TabStrip>
          <TrafficLights>
            <Light $c="#fe5f58" $b="#e2463f" />
            <Light $c="#febc3f" $b="#e0a12d" />
            <Light $c="#33c748" $b="#25ac35" />
          </TrafficLights>
          <Tab>
            <MdPublic size={34} color={GRAY} />
            <TabTitle>5-Day Weather</TabTitle>
            <svg width="20" height="20" viewBox="0 0 20 20">
              <path d="M3.500 3.500L16.500 16.500M16.500 3.500L3.500 16.500" stroke="#3c4043" strokeWidth="2.800" strokeLinecap="round" />
            </svg>
          </Tab>
          <NewTab viewBox="0 0 26 26">
            <path d="M13 3V23M3 13H23" stroke="#3c4043" strokeWidth="3.600" strokeLinecap="round" />
          </NewTab>
          <TabSearch viewBox="0 0 22 16">
            <path d="M3.500 3.500L11 11.500L18.500 3.500" fill="none" stroke="#3c4043" strokeWidth="3" strokeLinecap="round" />
          </TabSearch>
        </TabStrip>

        <Toolbar>
          <ToolIcon $w={26} $gap={31} viewBox="0 0 26 72">
            <path d="M25 36H2M12.500 25L1.800 36L12.500 47" fill="none" stroke="#babcbe" strokeWidth="2.800" strokeLinecap="round" />
          </ToolIcon>
          <ToolIcon $w={26} $gap={38} viewBox="0 0 26 72">
            <path d="M1 36H24M13.500 25L24.200 36L13.500 47" fill="none" stroke="#babcbe" strokeWidth="2.800" strokeLinecap="round" />
          </ToolIcon>
          <ReloadSlot><MdRefresh size={40} color={GRAY} /></ReloadSlot>
          <ToolIcon $w={26} $gap={36} viewBox="0 0 26 72">
            <path d="M1.500 37L13 25.500L24.500 37M5 34V47.500H21V34" fill="none" stroke={GRAY} strokeWidth="3" strokeLinejoin="round" />
          </ToolIcon>
          <Omnibox>
            <MdInfoOutline size={33} color={GRAY} />
            <Scheme>File</Scheme>
            <Divider />
            <Url>/Users/robbieweisshaar/Documents/bootcamp/homework/weather-app/index.html</Url>
            <ToolIcon $w={22} $gap={0} viewBox="0 0 22 72">
              <path d="M7 32H3.500Q1.200 32 1.200 34V47Q1.200 49 3.500 49H18.500Q20.800 49 20.800 47V34Q20.800 32 18.500 32H15M11 41V24.500M6 29L11 24L16 29" fill="none" stroke={GRAY} strokeWidth="2.400" />
            </ToolIcon>
            <StarSlot><MdStarBorder size={36} color={GRAY} /></StarSlot>
          </Omnibox>
          <ToolIcon $w={32} $gap={28} viewBox="0 0 32 72">
            <path d="M0 30H9.500V42H0Z" fill="#ff8080" />
            <path d="M10 23L25 32V35L20 32L19 30L10 30ZM10 49L25 40V37L20 40L19 42H10ZM23.500 29L32 36L23.500 43Z" fill="#ff8080" />
          </ToolIcon>
          <ToolIcon $w={32} $gap={33} viewBox="0 0 32 72">
            <MdExtension x="-2" y="18" size={34} color={GRAY} />
          </ToolIcon>
          <ToolIcon $w={28} $gap={33} viewBox="0 0 28 72">
            <path d="M0 22H28V50H0ZM4 26V46H18V26Z" fill={GRAY} fillRule="evenodd" />
          </ToolIcon>
          <Avatar>r</Avatar>
          <ToolIcon $w={6} $gap={39} viewBox="0 0 6 72">
            <g fill={GRAY}><circle cx="3" cy="26" r="3.100" /><circle cx="3" cy="36" r="3.100" /><circle cx="3" cy="46" r="3.100" /></g>
          </ToolIcon>
        </Toolbar>

        <Banner>WEATHER DASHBOARD</Banner>
        <Columns>
          <SearchForm>
            <h2>Enter City Name:</h2>
            <FormRow>
              <CityInput placeholder="Search" />
              <SearchButton>Search</SearchButton>
            </FormRow>
          </SearchForm>
          <HistoryPanel>
            <h2>Search History</h2>
            <CityPill>tampa</CityPill>
          </HistoryPanel>
        </Columns>
      </Window>

      <DockArea>
        <DockBar>
          {APPS.map(({ name, art, running, badge }) => (
            <DockSlot key={name} $running={running}>
              {art}
              {badge && <DockBadge>{badge}</DockBadge>}
            </DockSlot>
          ))}
          <DockSeparator $w={38.6} />
          <DockSlot><VSCode id="codeB" /></DockSlot>
          <DockSlot><Preview /></DockSlot>
          <DockSeparator $w={41} />
          <DockSlot><SharedFolder /></DockSlot>
          <DockSlot><Trash /></DockSlot>
        </DockBar>
      </DockArea>
    </Desktop>
  );
}
